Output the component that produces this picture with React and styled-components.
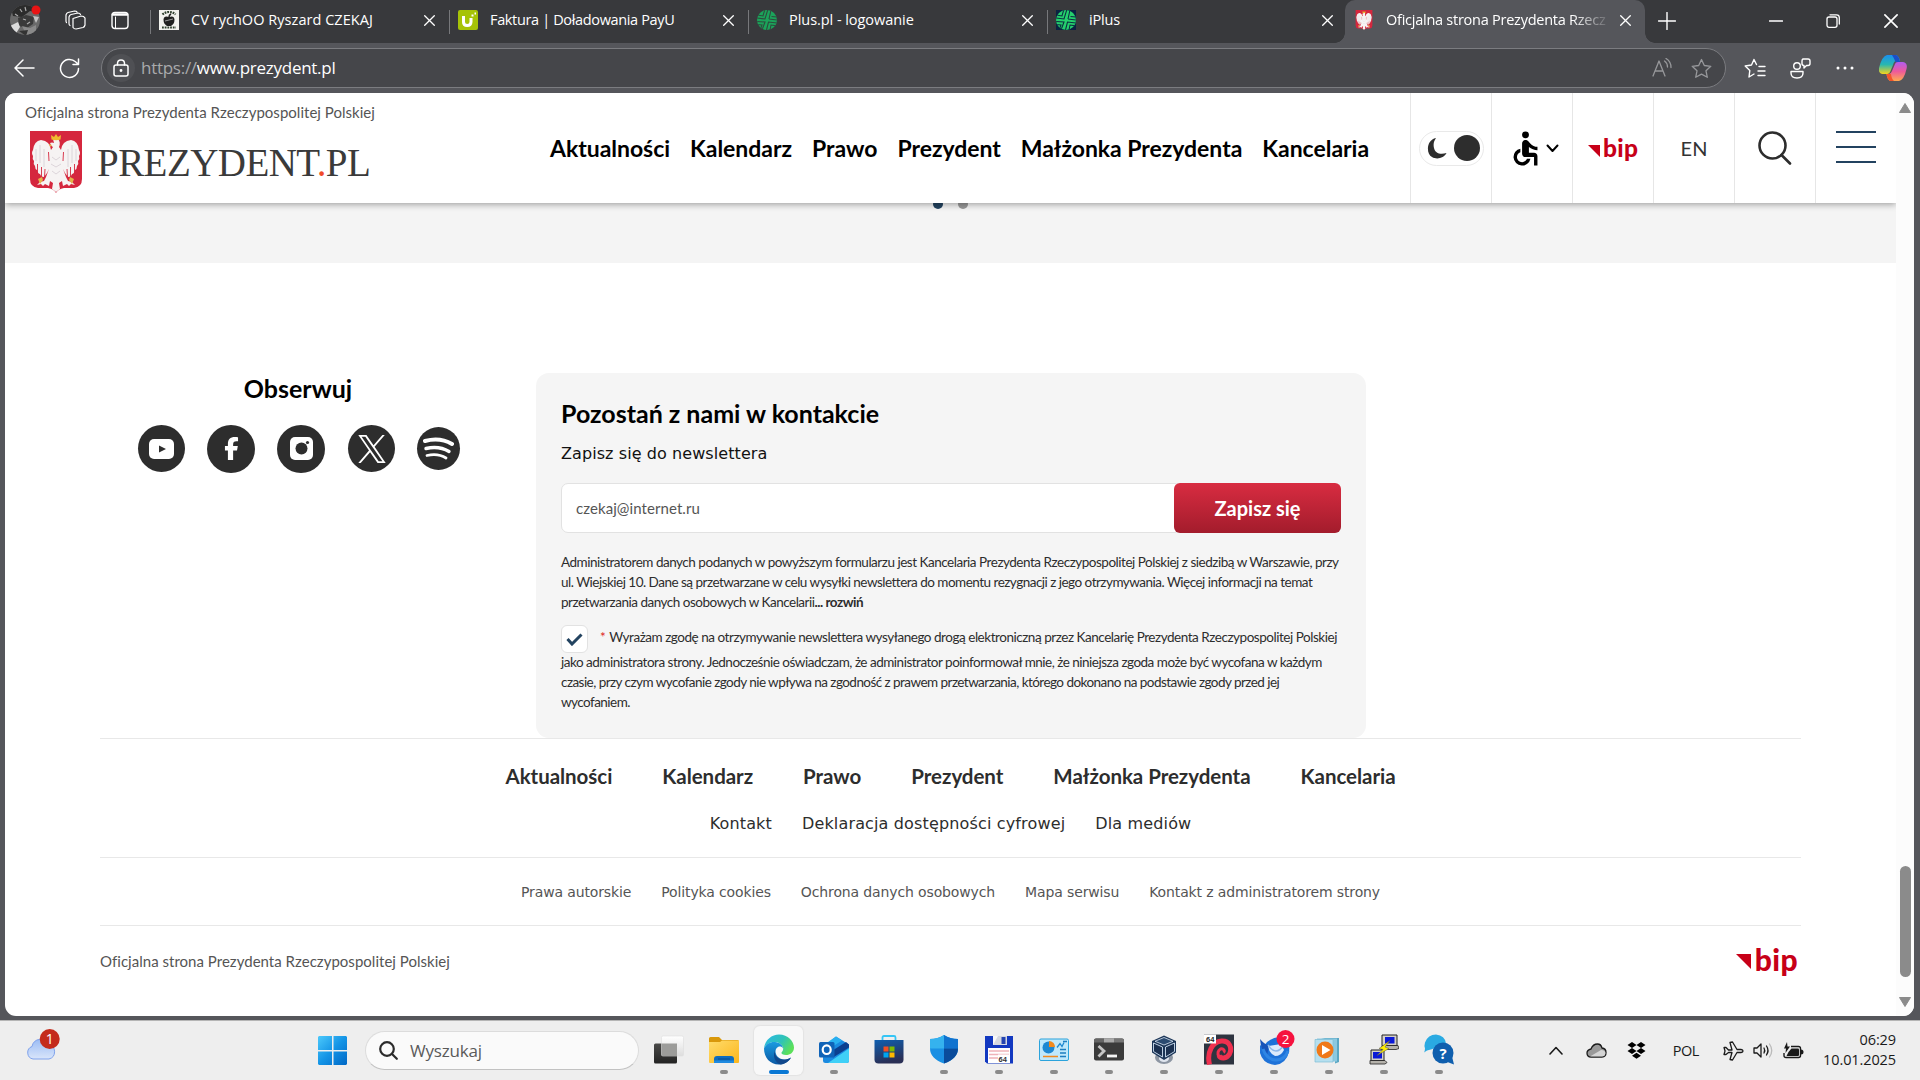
import React from "react";
import styled, { createGlobalStyle, css } from "styled-components";
import { MdAccessible } from "react-icons/md";
import { FaFacebookF } from "react-icons/fa6";

const UI = `"Open Sans", "Noto Sans", sans-serif`;
const LATO = `Lato, "Open Sans", sans-serif`;
const VERDANA = `"DejaVu Sans", sans-serif`;

const Global = createGlobalStyle`
  * { box-sizing: border-box; }
  body { margin: 0; background: #55565b; overflow: hidden; }
  svg { display: block; flex: none; }
  h1, h2, p { margin: 0; }
`;

const Screen = styled.div`
  width: 1920px;
  height: 1080px;
  display: flex;
  flex-direction: column;
  background: #55565b;
  font-family: ${UI};
`;

/* ---------- browser chrome ---------- */
const TabStrip = styled.div`
  height: 43px;
  flex: none;
  display: flex;
  background: #38393c;
  color: #fff;
`;
const StripTools = styled.div`
  width: 150px;
  display: flex;
  align-items: center;
  padding: 0 0 3px 10px;
`;
const Gap = styled.div`
  flex: none;
  width: ${(p) => p.$w}px;
`;
const Tab = styled.div`
  width: ${(p) => p.$w}px;
  flex: none;
  display: flex;
  align-items: center;
  padding: 0 ${(p) => p.$pr || 14}px 3px 9px;
  background: linear-gradient(#77787b, #77787b) 0 10px / 1px 24px no-repeat;
  ${(p) =>
    p.$active &&
    css`
      position: relative;
      padding: 0 14px 3px 10px;
      background: #55565b;
      border-radius: 10px 10px 0 0;
      &::before,
      &::after {
        content: "";
        position: absolute;
        bottom: 0;
        width: 10px;
        height: 10px;
      }
      &::before {
        left: -10px;
        background: radial-gradient(circle at 0 0, #38393c 9.5px, #55565b 10px);
      }
      &::after {
        right: -10px;
        background: radial-gradient(circle at 100% 0, #38393c 9.5px, #55565b 10px);
      }
    `}
`;
const TabTitle = styled.span`
  flex: 1;
  margin: 0 8px 0 ${(p) => p.$ml || 12}px;
  white-space: nowrap;
  font-size: 14.5px;
  line-height: 24px;
  letter-spacing: ${(p) => p.$ls}px;
  ${(p) =>
    p.$fade &&
    css`
      -webkit-mask-image: linear-gradient(90deg, #000 82%, transparent 100%);
      mask-image: linear-gradient(90deg, #000 82%, transparent 100%);
    `}
`;
const WindowButtons = styled.div`
  flex: 1;
  display: flex;
  align-items: center;
  padding: 0 22px 1px 13px;
`;
const Toolbar = styled.div`
  height: 50px;
  flex: none;
  display: flex;
  align-items: center;
  padding: 0 12px 0 14px;
  color: #fff;
`;
const AddressBar = styled.div`
  width: 1625px;
  height: 40px;
  display: flex;
  align-items: center;
  padding: 0 13px 0 5px;
  border: 1px solid #7b7c80;
  border-radius: 20px;
  background: #45464a;
`;
const LockBadge = styled.div`
  width: 28px;
  height: 28px;
  display: grid;
  place-items: center;
  border-radius: 50%;
  background: #4f5054;
`;
const Url = styled.div`
  flex: 1;
  margin: 0 0 1px 6px;
  font-size: 17px;
  letter-spacing: -0.27px;
  color: #a9aaac;
  b {
    font-weight: 400;
    color: #fff;
  }
`;

/* ---------- page viewport ---------- */
const Viewport = styled.div`
  height: 923px;
  margin: 0 6px 0 5px;
  flex: none;
  display: flex;
  overflow: hidden;
  background: #fff;
  border-radius: 11px;
`;
const Page = styled.div`
  width: 1891px;
  flex: none;
  overflow: hidden;
`;
const Scroll = styled.div`
  width: 18px;
  display: flex;
  flex-direction: column;
  align-items: center;
  padding: 10px 0 8px;
  background: #fcfcfc;
`;
const Thumb = styled.div`
  width: 11px;
  height: 111px;
  margin: 753px 0 20px;
  border-radius: 6px;
  background: #8b8b8b;
`;
const Header = styled.header`
  height: 110px;
  display: flex;
  position: relative;
  background: #fff;
  box-shadow: 0 1px 7px rgba(0, 0, 0, 0.4);
`;
const Brand = styled.div`
  width: 545px;
  padding: 9px 0 0 20px;
`;
const Official = styled.div`
  font: 400 15px/20px ${LATO};
  letter-spacing: 0.025px;
  color: #555;
  white-space: nowrap;
`;
const Logo = styled.div`
  display: flex;
  margin: 9px 0 0 5px;
`;
const LogoText = styled.div`
  margin: 10px 0 0 15px;
  font: 400 39px/44px "Liberation Serif", serif;
  letter-spacing: -0.55px;
  color: #3a3a3a;
  b {
    font-weight: 400;
    color: #f04a2a;
  }
`;
const Nav = styled.nav`
  flex: 1;
  display: flex;
  gap: 20px;
  padding-top: 41px;
  font: 700 23px/28px ${LATO};
  letter-spacing: -0.03px;
  color: #000;
  white-space: nowrap;
`;
const Cell = styled.div`
  width: 81px;
  flex: none;
  display: flex;
  align-items: center;
  justify-content: center;
  border-left: 1px solid #e6e6e6;
  font: 400 20px/24px ${LATO};
  color: #333;
`;
const Toggle = styled.div`
  width: 65px;
  height: 35px;
  display: flex;
  align-items: center;
  justify-content: space-between;
  padding: 0 3px 0 7px;
  border: 1px solid #e9e9e9;
  border-radius: 18px;
`;
const ToggleDot = styled.div`
  width: 26px;
  height: 26px;
  border-radius: 50%;
  background: #2d2d2d;
`;
const Burger = styled.div`
  width: 40px;
  height: 32px;
  margin-bottom: 2px;
  border: solid #234360;
  border-width: 2px 0;
  background: linear-gradient(#234360, #234360) 0 13px / 100% 2px no-repeat;
`;
const Bip = styled.div`
  display: flex;
  align-items: flex-start;
  margin-top: ${(p) => p.$mt || 0}px;
  color: #c70018;
  font: 900 ${(p) => p.$s}px/1 "Lato", sans-serif;
  letter-spacing: 0.4px;
  svg {
    margin: ${(p) => p.$s * 0.34}px ${(p) => p.$s * 0.13}px 0 0;
  }
`;
const Band = styled.div`
  height: 60px;
  display: flex;
  justify-content: center;
  gap: 15px;
  background: #f4f4f4;
`;
const Dot = styled.i`
  width: 10px;
  height: 10px;
  margin-top: -4px;
  border-radius: 50%;
  background: ${(p) => p.$c};
`;
const Columns = styled.section`
  display: flex;
  align-items: flex-start;
  padding: 110px 0 0 133px;
`;
const Social = styled.div`
  width: 398px;
  flex: none;
`;
const SocialTitle = styled.h2`
  width: 320px;
  text-align: center;
  font: 700 25px/30px ${LATO};
  color: #000;
`;
const SocialRow = styled.div`
  display: flex;
  align-items: center;
  height: 48px;
  margin-top: 21.5px;
`;
const Circle = styled.div`
  width: ${(p) => p.$d}px;
  height: ${(p) => p.$d}px;
  margin-right: ${(p) => p.$mr}px;
  display: grid;
  place-items: center;
  border-radius: 50%;
  background: #2d2d2d;
  color: #fff;
`;
const Card = styled.div`
  width: 830px;
  height: 365px;
  padding: 25px;
  border-radius: 13px;
  background: #f5f5f5;
`;
const CardTitle = styled.h2`
  font: 700 25px/30px ${LATO};
  color: #000;
`;
const CardSub = styled.p`
  margin-top: 15px;
  font: 400 16px/22px ${VERDANA};
  letter-spacing: 0.08px;
  color: #111;
`;
const Form = styled.div`
  display: flex;
  height: 50px;
  margin-top: 18px;
`;
const Field = styled.div`
  flex: 1;
  margin-right: -8px;
  padding: 0 14px;
  border: 1px solid #e2e2e2;
  border-radius: 7px;
  background: #fff;
  font: 400 15px/48px ${LATO};
  letter-spacing: 0.08px;
  color: #555;
`;
const Submit = styled.button`
  width: 167px;
  position: relative;
  border: 0;
  padding: 0;
  border-radius: 6px;
  background: linear-gradient(#d82c41, #a31c2c);
  font: 700 20px/50px ${LATO};
  color: #fff;
`;
const Legal = styled.p`
  margin-top: ${(p) => p.$mt}px;
  font: 400 13.5px/20px ${LATO};
  color: #2d2d2d;
  white-space: nowrap;
`;
const Line = styled.span`
  display: block;
  letter-spacing: ${(p) => p.$ls}px;
`;
const Check = styled.span`
  display: inline-grid;
  place-items: center;
  width: 27px;
  height: 28px;
  margin: 0 12px -1px 0;
  vertical-align: -3.5px;
  border: 1px solid #e2e2e2;
  border-radius: 6px;
  background: #fff;
`;
const Star = styled.span`
  margin-right: 4px;
  color: #d22;
`;
const Footer = styled.footer`
  width: 1701px;
  margin-left: 95px;
`;
const FootBlock = styled.div`
  height: ${(p) => p.$h}px;
  border-top: 1px solid #e8e8e8;
`;
const FootNav = styled.div`
  display: flex;
  justify-content: center;
  gap: 50px;
  padding-top: 24px;
  font: 700 20.5px/26px ${LATO};
  letter-spacing: -0.04px;
  color: #2d2d2d;
`;
const FootLinks = styled.div`
  display: flex;
  justify-content: center;
  gap: 30px;
  padding-top: ${(p) => p.$pt}px;
  font: 400 ${(p) => p.$s}px/22px ${VERDANA};
  letter-spacing: ${(p) => p.$ls}px;
  color: ${(p) => p.$c};
`;
const FootBottom = styled.div`
  display: flex;
  justify-content: space-between;
  align-items: flex-start;
  padding: 25px 3px 0 0;
  border-top: 1px solid #e8e8e8;
`;

/* ---------- taskbar ---------- */
const Taskbar = styled.div`
  height: 60px;
  margin-top: 4px;
  flex: none;
  display: flex;
  align-items: center;
  background: #eee;
  border-top: 1px solid #b5b5b5;
`;
const Weather = styled.div`
  width: 318px;
  padding: 0 0 5px 24px;
`;
const SearchPill = styled.div`
  width: 274px;
  height: 39px;
  margin: 0 5px 0 17px;
  display: flex;
  align-items: center;
  gap: 12px;
  padding-left: 13px;
  border: 1px solid #dcdcdc;
  border-bottom-color: #c2c2c2;
  border-radius: 20px;
  background: #fafafa;
  font-size: 17px;
  letter-spacing: -0.2px;
  color: #5a5a5a;
`;
const TaskButton = styled.div`
  width: 49px;
  height: 49px;
  margin-right: 6px;
  flex: none;
  display: flex;
  flex-direction: column;
  align-items: center;
  padding-top: 8px;
  border-radius: 6px;
  background: ${(p) => (p.$on ? "#f8f8f8" : "transparent")};
  box-shadow: ${(p) => (p.$on ? "0 0 1px 1px #e3e3e3" : "none")};
`;
const Mark = styled.i`
  width: ${(p) => (p.$on ? 20 : 8)}px;
  height: 4px;
  margin-top: 4.5px;
  border-radius: 2px;
  background: ${(p) => (p.$on ? "#0a78d4" : "#8a8a8a")};
`;
const BirdIcon = styled.svg`
  margin: -5px 0 -1px 6px;
`;
const Tray = styled.div`
  margin-left: auto;
  display: flex;
  align-items: center;
  padding-right: 24px;
  color: #1a1a1a;
  font-size: 14.5px;
  letter-spacing: -0.4px;
`;
const Clock = styled.div`
  width: 92px;
  padding-bottom: 2px;
  text-align: right;
  font-size: 14.5px;
  line-height: 20px;
  letter-spacing: -0.1px;
`;

/* ---------- drawings ---------- */
const Stroke = ({ w, h, vb, sw = 1.5, c = "currentColor", children }) => (
  <svg width={w} height={h} viewBox={vb || `0 0 ${w} ${h}`} fill="none" stroke={c} strokeWidth={sw} strokeLinecap="round" strokeLinejoin="round">
    {children}
  </svg>
);
const Cross = ({ s = 11 }) => (
  <Stroke w={s} h={s} vb="0 0 11 11" sw={1.3}>
    <path d="M.7.7l9.6 9.6M10.3.7L.7 10.3" />
  </Stroke>
);
const Crest = ({ w, h }) => (
  <svg width={w} height={h} viewBox="0 0 52 62">
    <path d="M0 0h52v48q0 8-8 9H34q-6 1-8 5-2-4-8-5H8q-8-1-8-9z" fill="#d5273e" />
    <path
      d="M24 12q-2-1-4 0 1 3 3 4l-2 3q-1-9-10-10-7 1-8 10-2 3 0 6-1 3 1 5-1 3 1 5 0 3 2 4 1 4 3 4 1 3 4 3l3-4 2-4-3 8-2 4-4 1-3 3 4-1 2 2 2-2 4 2 1-5 3 2-1 6 4 3 4-3-1-6 3-2 1 5 4-2 2 2 2-2 4 1-3-3-4-1-2-4-3-8 2 4 3 4q3 0 4-3 2 0 3-4 2-1 2-4 2-2 1-5 2-2 1-5 2-3 0-6-1-9-8-10-9 1-10 10l-2-3q2-5-1-8-3-2-5 0z"
      fill="#f6f3f3"
    />
    <path d="M10 14v18M6 18v12M14 18v18M42 14v18M46 18v12M38 18v18M22 26l4 3 4-3M21 33l5 3 5-3M22 40l4 3 4-3" stroke="#d6cdd3" strokeWidth=".8" fill="none" />
    <path d="M7.500 33v9M11.500 36v11M15 38l-.5 8M44.500 33v9M40.500 36v11M37 38l.5 8M18.500 21l.5 9M33.500 21l-.5 9" stroke="#d5273e" strokeWidth=".9" fill="none" />
    <path d="M21.500 8.500L21 4l3 2 2-3 2 3 3-2-.5 4.500q-4.500 1.500-9 0z" fill="#efb92f" />
    <path d="M19 13l3 1-2 2zM8 48l4-2 1 3-3 4zM44 48l-4-2-1 3 3 4zM15 52l3 2M37 52l-3 2" fill="#e4b44a" />
  </svg>
);
const PlusBall = ({ dark }) => (
  <svg width="20" height="20" viewBox="0 0 20 20">
    {dark && <rect width="20" height="20" fill="#0b2341" />}
    <clipPath id={dark ? "pb1" : "pb2"}>
      <circle cx="10" cy="10" r="10" />
    </clipPath>
    <g clipPath={`url(#${dark ? "pb1" : "pb2"})`}>
      <rect width="20" height="20" fill={dark ? "#24d06c" : "#1ba35a"} />
      <path d="M0 8l8 1 3-10M0 5l6 1 2-7M0 11.500l8 .5-3 8M9.500 20l2-8 9 1M13 20l1-5 7 1M12 9l2-9M12 9l8 1M14.500 6.500l6 .5M3 20l2-5-5-.5" stroke={dark ? "#0b2f41" : "#2e4a3d"} strokeWidth="1.100" fill="none" />
    </g>
  </svg>
);
const BipLogo = ({ s, mt }) => (
  <Bip $s={s} $mt={mt}>
    <svg width={s * 0.5} height={s * 0.5} viewBox="0 0 12 12">
      <path d="M0 0h12v12z" fill="#c70018" />
    </svg>
    bip
  </Bip>
);

const Cloud = () => (
  <svg width="36" height="38" viewBox="0 0 36 38">
    <defs>
      <linearGradient id="cl" x2="0" y2="1">
        <stop stopColor="#9bbcf4" />
        <stop offset="1" stopColor="#d9e5fa" />
      </linearGradient>
    </defs>
    <path d="M9 30a6.500 6.500 0 0 1-1-12.500 9 9 0 0 1 17-2 7.500 7.500 0 0 1 0 14.500z" fill="url(#cl)" stroke="#7fa2ec" strokeWidth="1" />
    <circle cx="25.700" cy="10" r="10" fill="#c42b1c" />
    <text x="25.700" y="15" fontSize="14" fill="#fff" textAnchor="middle" fontFamily="Open Sans">1</text>
  </svg>
);

const I = ({ children }) => (
  <svg width="30" height="31" viewBox="0 0 30 30">
    {children}
  </svg>
);
const Icons = {
  task: (
    <I>
      <defs>
        <linearGradient id="tv" x2="0" y2="1"><stop stopColor="#4a4a48" /><stop offset="1" stopColor="#222" /></linearGradient>
        <linearGradient id="tw" x2="0" y2="1"><stop stopColor="#fff" /><stop offset="1" stopColor="#ddd" /></linearGradient>
      </defs>
      <rect x="0" y="9" width="23" height="20" rx="1.500" fill="url(#tv)" />
      <rect x="7.500" y="1.500" width="22" height="20" rx="1.500" fill="url(#tw)" stroke="#ddd" strokeWidth=".6" />
      <path d="M7.500 9H23v12.500H9q-1.500 0-1.500-1.500z" fill="#9c9c9a" />
    </I>
  ),
  folder: (
    <I>
      <defs><linearGradient id="fo" x2="1" y2="1"><stop stopColor="#ffdc6b" /><stop offset="1" stopColor="#fbb61c" /></linearGradient></defs>
      <path d="M0 4q0-1.500 1.500-1.500H10l3 3h15.500Q30 5.500 30 7v4H0z" fill="#d9980a" />
      <path d="M0 7.500h11l2-1.500h17v21.500q0 1-1 1H1q-1 0-1-1z" fill="url(#fo)" />
      <path d="M5 28.500v-4q0-3 3-3h14q3 0 3 3v4z" fill="#0f6cbd" />
      <path d="M5 26h20v2.500H5z" fill="#1f8ae0" />
      <path d="M9 24.500h12" stroke="#0a4a8c" />
    </I>
  ),
  edge: (
    <I>
      <defs>
        <linearGradient id="e1" x2="1" y2=".5"><stop stopColor="#2bb8e8" /><stop offset=".6" stopColor="#2fc3b8" /><stop offset="1" stopColor="#5be05a" /></linearGradient>
        <linearGradient id="e2" x2="0" y2="1"><stop stopColor="#1a9be0" /><stop offset="1" stopColor="#0c59a4" /></linearGradient>
      </defs>
      <path d="M0 14C1 5 8 0 15 0c9 0 15 7 15 13 0 5-4 7.500-8 7.500-3 0-5-1-4.500-2.500C19 16 19.500 15 19 13c-1-4-6-6-10-5.500C5 8 2 10 0 14z" fill="url(#e1)" />
      <path d="M0 14c2-5 7-7 11-6.500 4.500.5 8 3 8 6.500-1-2-3-2.500-5-1.500-4 2-3 9 2 11.500 4 2 8 1 11-1-3 5-8 7-12 7C6 30 0 23 0 14z" fill="url(#e2)" />
      <path d="M12 14c-3 4 0 9 4 10.500 4 1.500 8 .5 11-1.500-2 4-6 6.500-10 7-6-1-9.500-10-5-16z" fill="#11488c" />
    </I>
  ),
  outlook: (
    <I>
      <path d="M4 12L17 2l13 8v16q0 2.500-2.500 2.500h-21Q4 28.500 4 26z" fill="#1a8ae0" />
      <path d="M4 11L17 2l6 4-14 9z" fill="#28b0f0" />
      <path d="M12 17l15-9.500 3 2.500v3L14 23z" fill="#0b3f8f" />
      <path d="M9 28.500L30 14v12q0 2.500-2.500 2.500z" fill="#3fd0f7" />
      <rect x="0" y="7.500" width="15.500" height="15.500" rx="1.500" fill="#0f63b8" />
      <ellipse cx="7.700" cy="15.200" rx="4" ry="4.300" fill="none" stroke="#fff" strokeWidth="2.200" />
    </I>
  ),
  store: (
    <I>
      <defs><linearGradient id="st" x2=".3" y2="1"><stop stopColor="#0f5fb0" /><stop offset="1" stopColor="#2a2f55" /></linearGradient></defs>
      <path d="M8.500 6V3q0-1.500 1.500-1.500h10q1.500 0 1.500 1.500v3" fill="none" stroke="#35c5f5" strokeWidth="1.800" />
      <path d="M.5 5.500h29V25q0 4-4 4h-21q-4 0-4-4z" fill="url(#st)" />
      <path d="M9.500 12h5v5h-5z" fill="#f25022" /><path d="M15.500 12h5v5h-5z" fill="#7fba00" />
      <path d="M9.500 18h5v5h-5z" fill="#00a4ef" /><path d="M15.500 18h5v5h-5z" fill="#ffb900" />
    </I>
  ),
  shield: (
    <I>
      <path d="M15 .5q6 4 14 4V14q0 10-14 15Q1 24 1 14V4.500q8 0 14-4z" fill="#1a8fe3" />
      <path d="M15 .5q6 4 14 4V14H15z" fill="#1173cf" /><path d="M1 4.500q8 0 14-4V14H1z" fill="#35b2ee" />
      <path d="M15 14h14q0 10-14 15z" fill="#0a4b9b" />
    </I>
  ),
  floppy: (
    <I>
      <path d="M1 1.500h28v27.500H3l-2-2z" fill="#1238c0" />
      <path d="M9 1.500h14v9H9z" fill="#d5d8e0" /><path d="M17.500 2.500h4v7h-4z" fill="#2444b0" /><path d="M9 1.500h5l-5 9z" fill="#f8f8f8" />
      <path d="M4 13.500h22v15H4z" fill="#fff" />
      <path d="M5 16.500h20M5 20h20M5 23.500h20" stroke="#efb3b8" strokeWidth="1.500" />
      <rect x="14" y="20" width="11" height="7.500" fill="#fff" />
      <text x="14.500" y="27" fontSize="7.500" fontWeight="700" fontFamily="Liberation Sans" fill="#333">64</text>
    </I>
  ),
  panel: (
    <I>
      <rect x=".5" y="4.500" width="29" height="21.500" rx="1.500" fill="#bfe8fb" stroke="#2ba3dc" />
      <circle cx="9.500" cy="13" r="6" fill="#1e88d2" /><path d="M10 12.500V6.500a6 6 0 0 1 6 6z" fill="#f28a1e" />
      <path d="M18 13l3-4 2 3 2-4" stroke="#1e88d2" strokeWidth="1.300" fill="none" />
      <path d="M4 22h15" stroke="#f28a1e" strokeWidth="1.500" />
      <path d="M21 15h6M21 18.500h6M21 22h6M24 7h4" stroke="#1e7ec0" strokeWidth="1.600" />
    </I>
  ),
  term: (
    <I>
      <path d="M0 6q0-2 2-2h26q2 0 2 2v18q0 2-2 2H2q-2 0-2-2z" fill="#3b3b3b" />
      <path d="M0 8V6q0-2 2-2h8v4z" fill="#666" /><path d="M10 4h10v4H10z" fill="#aaa" /><path d="M20 4h8q2 0 2 2v2H20z" fill="#777" />
      <path d="M4.500 11.500l5.500 5-5.500 5.500" stroke="#c5c5c5" strokeWidth="2.800" fill="none" />
      <path d="M13 21.500h10" stroke="#f4f4f4" strokeWidth="2.800" />
    </I>
  ),
  vbox: (
    <I>
      <ellipse cx="15" cy="23" rx="9" ry="6.500" fill="#8c95a2" /><ellipse cx="15" cy="24" rx="5" ry="3.500" fill="#dfe5ee" />
      <path d="M3 6.500L15 1l12 5.500V18l-12 7.500L3 18z" fill="#1b3557" />
      <path d="M6 6.800L15 3l9 3.800-9 3.700z" fill="#2a4a70" stroke="#dbe6f2" strokeWidth=".8" />
      <path d="M4.500 8.500l9 4v10l-9-5.500zM25.500 8.500l-9 4v10l9-5.500z" fill="#1a3050" stroke="#cfe0f2" strokeWidth=".9" />
    </I>
  ),
  red: (
    <I>
      <rect width="30" height="30" fill="#2e3440" />
      <path d="M5.500 30C2.500 18 8.500 7 17.500 6.500c8-.5 11 7 8 13-3 5-9 5-10.500 1.500" fill="none" stroke="#f0304f" strokeWidth="5" />
      <path d="M15 22c-2-3-1-6 1.500-7.500 3-1 5 2 3 3.500" fill="none" stroke="#f0304f" strokeWidth="3" />
      <rect width="12" height="9" fill="#fff" />
      <text x="2" y="7.500" fontSize="7.500" fontWeight="700" fontFamily="Liberation Sans" fill="#222">64</text>
    </I>
  ),
  bird: (
    <BirdIcon width="36" height="37" viewBox="0 0 36 37">
      <path d="M1 16q2 2 4 1 5-8 15-9l9 3q2 6 1 12-3 12-14 13Q4 35 1 24z" fill="#1e72d8" />
      <path d="M1 10q5 6 9 6L8 27q-6-5-7-17z" fill="#1753b8" />
      <path d="M9 17l13-2 3 6q-3 6-9 6-6-3-7-10z" fill="#dcebfb" />
      <path d="M9 16q4 6 8 6t8-6" fill="none" stroke="#8db8ea" strokeWidth="1.500" />
      <path d="M4 20q4 11 13 11t12-9" fill="none" stroke="#2f86e4" strokeWidth="3" />
      <circle cx="26.500" cy="10" r="9" fill="#f6123f" />
      <text x="26.500" y="15" fontSize="13.500" textAnchor="middle" fill="#fff" fontFamily="Open Sans">2</text>
    </BirdIcon>
  ),
  media: (
    <I>
      <path d="M7 3.500h18v24l-4 1.500V7z" fill="#5aa7c4" /><path d="M3 4h20v23H3z" fill="#8cc9e0" /><path d="M1 5h18v22.500H1z" fill="#b5dfef" stroke="#7ebdd6" strokeWidth=".7" />
      <circle cx="11" cy="15.500" r="8.500" fill="#f07818" /><path d="M8 10.500l8.500 5-8.500 5z" fill="#fff" />
    </I>
  ),
  putty: (
    <I>
      <path d="M13 .5h15v10.500H13z" fill="#d4d0c8" stroke="#222" /><path d="M16 2.500h9.500v6.500H16z" fill="#0a18d8" />
      <path d="M13 11h16l1 3-3 1H12z" fill="#b5b2ab" stroke="#222" strokeWidth=".8" />
      <path d="M2 15.500h13V26H2z" fill="#d4d0c8" stroke="#222" /><path d="M4 17.500h9V24H4z" fill="#0a18d8" />
      <path d="M1 26h15l2 2-2 1.500H1z" fill="#b5b2ab" stroke="#222" strokeWidth=".8" />
      <path d="M21 6l-11 8 4 1-6 6 12-7-4-1.500z" fill="#ffee00" stroke="#555" strokeWidth=".5" />
    </I>
  ),
  help: (
    <I>
      <path d="M0 18q1-2 1-4-1-3 0-6Q4 0 12 0q9 1 10 9-6 0-10 4-4 2-9 3z" fill="#2aaae2" />
      <circle cx="19" cy="18.500" r="10.500" fill="#0f5fae" /><path d="M22 27l8 3-2-8z" fill="#0f5fae" />
      <text x="19" y="24" fontSize="15" fontWeight="700" textAnchor="middle" fill="#fff" fontFamily="Open Sans">?</text>
    </I>
  ),
};

const apps = [
  ["task", 0], ["folder", 1], ["edge", 2], ["outlook", 1], ["store", 0], ["shield", 1], ["floppy", 1],
  ["panel", 1], ["term", 1], ["vbox", 1], ["red", 1], ["bird", 1], ["media", 1], ["putty", 1], ["help", 1],
];
const sections = ["Aktualności", "Kalendarz", "Prawo", "Prezydent", "Małżonka Prezydenta", "Kancelaria"];
const official = "Oficjalna strona Prezydenta Rzeczypospolitej Polskiej";

const Chrome = () => (
  <>
    <TabStrip>
      <StripTools>
        <svg width="32" height="32" viewBox="0 0 32 32">
          <defs><clipPath id="av"><circle cx="15" cy="16" r="15" /></clipPath></defs>
          <g clipPath="url(#av)">
            <rect width="32" height="32" fill="#6a6a6a" />
            <path d="M0 0h32v9L20 7 12 13 3 12z" fill="#2b2b2b" />
            <path d="M8 14l8-3 8 2-1 7-6 4-8-2z" fill="#3a3a3a" /><path d="M0 22l8-4 2 5-5 8z" fill="#ddd" />
            <path d="M12 22l8 2 6-3v8l-9 3z" fill="#8a8a8a" /><path d="M23 12l6 1-3 6z" fill="#c4c4c4" /><path d="M9 27l9-1-2 6z" fill="#333" />
            <path d="M10 5l2 3M15 3l1 4M5 10l3 2M13 15l3 1M20 18l-3 2" stroke="#aaa" strokeWidth="1.200" />
          </g>
          <circle cx="26" cy="6" r="4.500" fill="#e81414" />
        </svg>
        <Gap $w={23} />
        <Stroke w={21} h={20} sw={1.2}>
          <path d="M8 8.500l8-2.500q3 0 4 2v7q-.5 2-2 2.500L11 19q-2 0-3-1.500z" />
          <path d="M5 15.500q-1-.5-1-2V7q.5-2 2-2.500L13 3q2 0 2.500 1.500M1.500 12.500Q1 12 1 11V5q.5-2 2-2.500L9.500 1q2 0 2.500 1" />
        </Stroke>
        <Gap $w={25} />
        <Stroke w={18} h={19} sw={1.4}>
          <rect x="1" y="1.500" width="16" height="16" rx="3" /><path d="M2 3.500h14" strokeWidth="2.600" /><path d="M4.500 6v11" strokeWidth="1" />
        </Stroke>
      </StripTools>
      <Tab $w={299}>
        <svg width="20" height="20" viewBox="0 0 20 20">
          <rect width="20" height="20" fill="#f2f2ee" />
          <path d="M3.500 4.500Q6 2 10 2t6.500 2.500M3 17.500h14" fill="none" stroke="#30402f" strokeWidth="2.200" strokeDasharray="1.800 .9" />
          <path d="M10 7q5-2 5.500 2.500 0 4.500-3.500 6.500H8q-3.500-2-3.500-6.500Q5 5 10 7z" fill="#1f1f1f" /><path d="M10 7q0-2 2-3" stroke="#222" strokeWidth="1.500" fill="none" /><path d="M6 11l8-2" stroke="#999" />
        </svg>
        <TabTitle $ls={0.04}>CV rychOO Ryszard CZEKAJ</TabTitle><Cross />
      </Tab>
      <Tab $w={299}>
        <svg width="20" height="20" viewBox="0 0 20 20">
          <rect width="20" height="20" rx="2" fill="#a6c307" />
          <path d="M5.500 6v6q0 3.500 3.700 3.500T13 12V8" fill="none" stroke="#fff" strokeWidth="3" /><path d="M13.500 5.500h2M16.500 3.500h1.500" stroke="#fff" strokeWidth="2" />
        </svg>
        <TabTitle $ls={-0.35}>Faktura | Doładowania PayU</TabTitle><Cross />
      </Tab>
      <Tab $w={299}><PlusBall /><TabTitle $ls={-0.05}>Plus.pl - logowanie</TabTitle><Cross /></Tab>
      <Tab $w={298} $pr={12}><PlusBall dark /><TabTitle $ls={-0.2} $ml={13}>iPlus</TabTitle><Cross /></Tab>
      <Tab $w={300} $active>
        <Crest w={18} h={20} />
        <Gap $w={1} />
        <TabTitle $ls={-0.25} $fade>Oficjalna strona Prezydenta Rzecz</TabTitle><Cross />
      </Tab>
      <WindowButtons>
        <Stroke w={18} h={18} sw={1.4}><path d="M9 .5v17M.5 9h17" /></Stroke>
        <Gap $w={93} />
        <Stroke w={14} h={14} sw={1.3}><path d="M.5 7h13" /></Stroke>
        <Gap $w={43} />
        <Stroke w={14} h={14} sw={1.3}><rect x="1" y="3" width="10" height="10.300" rx="2" /><path d="M4 .8h6.500q2.800 0 2.800 2.800V10" /></Stroke>
        <Gap $w={44} />
        <Cross s={14} />
      </WindowButtons>
    </TabStrip>
    <Toolbar>
      <Stroke w={21} h={18} sw={1.5}><path d="M20 9H1M9 1L1 9l8 8" /></Stroke>
      <Gap $w={24} />
      <Stroke w={21} h={21} sw={1.5}><path d="M19.500 10.500a9 9 0 1 1-3-6.800L19 6M19.500 1v5.500H14" /></Stroke>
      <Gap $w={21} />
      <AddressBar>
        <LockBadge>
          <Stroke w={16} h={18} sw={1.5}><rect x="1" y="6" width="14" height="11" rx="2" /><path d="M4.500 6V4.500q0-3.500 3.500-3.500t3.500 3.500V6" /><circle cx="8" cy="11.500" r=".7" fill="#fff" /></Stroke>
        </LockBadge>
        <Url>https://<b>www.prezydent.pl</b></Url>
        <Stroke w={20} h={20} sw={1.3} c="#97989b"><path d="M1 18L7 3l6 15M3 13h8M12.500 3q3 2 3 6M14 .5q5 3 5 9" /></Stroke>
        <Gap $w={19} />
        <Stroke w={21} h={21} sw={1.3} c="#97989b"><path d="M10.500 1.500l2.800 6 6.500.8-4.800 4.500 1.300 6.500-5.800-3.200-5.800 3.200L6 12.800 1.200 8.300l6.500-.8z" /></Stroke>
      </AddressBar>
      <Gap $w={18} />
      <Stroke w={22} h={21} sw={1.4}><path d="M12.500 6.500L10 1.500 7.500 7 1.200 8l4.600 4.600L5 19l5-3M15 8.500h6M14 13h7M14 17.500h7" /></Stroke>
      <Gap $w={24} />
      <Stroke w={21} h={21} sw={1.4}><circle cx="7" cy="8" r="3.300" /><path d="M1 13.500h12v1.500q0 5-6 5t-6-5zM13 1h5q2 0 2 2v2.500q0 2-2 2h-1.500L14 10V7.500q-2 0-2-2V3q0-1.500 1-2z" /></Stroke>
      <Gap $w={25} />
      <svg width="18" height="4" viewBox="0 0 18 4" fill="#fff"><circle cx="2" cy="2" r="1.500" /><circle cx="9" cy="2" r="1.500" /><circle cx="16" cy="2" r="1.500" /></svg>
      <Gap $w={25} />
      <svg width="28" height="26" viewBox="0 0 28 26">
        <defs>
          <linearGradient id="c1" x2="0" y2="1"><stop stopColor="#1a8ff0" /><stop offset=".5" stopColor="#28b7b0" /><stop offset="1" stopColor="#f5d31c" /></linearGradient>
          <linearGradient id="c2" x2="0" y2="1"><stop stopColor="#b05cf0" /><stop offset=".5" stopColor="#ee5a9a" /><stop offset="1" stopColor="#ffab50" /></linearGradient>
        </defs>
        <path d="M8 0h9q3 1 4 6h-4q-2 0-3 4l-2.500 6q-1 3-3.500 3H3q-4-1-3-6Q3 1 8 0z" fill="url(#c1)" />
        <path d="M13 0h4q3 1 4 7h-4.500q-2-5-3.500-7z" fill="#1b4fc8" />
        <path d="M20 26h-9q-3-2-3.500-7H10q2 0 3-3l3-7q.5-2 3-2h5q5 1 3.500 7Q25 25 20 26z" fill="url(#c2)" />
        <path d="M7.500 19H12q.5 5 3 7h-4q-3-2-3.500-7z" fill="#f2552c" />
      </svg>
    </Toolbar>
  </>
);

export default function App() {
  return (
    <Screen>
      <Global />
      <Chrome />
      <Viewport>
        <Page>
          <Header>
            <Brand>
              <Official>{official}</Official>
              <Logo><Crest w={52} h={62} /><LogoText>PREZYDENT<b>.</b>PL</LogoText></Logo>
            </Brand>
            <Nav>{sections.map((s) => <span key={s}>{s}</span>)}</Nav>
            <Cell>
              <Toggle>
                <svg width="20" height="24" viewBox="0 0 20 24"><path d="M9 2C-1 4-1 18 5 21c5 3 12 1 14.500-4C13 19 8 17 7 12 6 8 7 5 9 2z" fill="#2d2d2d" /></svg>
                <ToggleDot />
              </Toggle>
            </Cell>
            <Cell>
              <MdAccessible size={41} color="#000" />
              <Stroke w={13} h={9} sw={2} c="#000"><path d="M1.500 1.500l5 5.500 5-5.500" /></Stroke>
            </Cell>
            <Cell><BipLogo s={24.5} mt={1} /></Cell>
            <Cell>EN</Cell>
            <Cell><Stroke w={34} h={34} sw={2.6} c="#2d2d2d"><circle cx="14.500" cy="14.500" r="13" /><path d="M23.500 24l8.500 8.500" /></Stroke></Cell>
            <Cell><Burger /></Cell>
          </Header>
          <Band><Dot $c="#234360" /><Dot $c="#999" /></Band>
          <Columns>
            <Social>
              <SocialTitle>Obserwuj</SocialTitle>
              <SocialRow>
                <Circle $d={47} $mr={22}><svg width="25" height="20" viewBox="0 0 25 20"><rect width="25" height="20" rx="5" fill="#fff" /><path d="M10 6.500l7 3.500-7 3.500z" fill="#2d2d2d" /></svg></Circle>
                <Circle $d={48} $mr={22}><FaFacebookF size={23} /></Circle>
                <Circle $d={48} $mr={23}><svg width="23" height="23" viewBox="0 0 23 23"><rect width="23" height="23" rx="5" fill="#fff" /><circle cx="11.500" cy="11.500" r="6" fill="#2d2d2d" /><circle cx="17.500" cy="5.500" r="1.600" fill="#2d2d2d" /></svg></Circle>
                <Circle $d={47} $mr={21.5}><svg width="28" height="28" viewBox="0 0 24 24"><path d="M14.234 10.162 22.977 0h-2.072l-7.591 8.824L7.251 0H.258l9.168 13.343L.258 24H2.33l8.016-9.318L16.749 24h6.993zm-2.837 3.299-.929-1.329L3.076 1.560h3.182l5.965 8.532.929 1.329 7.754 11.090h-3.182z" fill="#fff" /></svg></Circle>
                <Circle $d={43} $mr={0}><svg width="31" height="23" viewBox="0 0 31 23" fill="none" stroke="#fff" strokeLinecap="round"><path d="M2 4q15-4 27 3" strokeWidth="4" /><path d="M3 11.500q13-3 23 3" strokeWidth="3.400" /><path d="M4 18.500q11-2.500 19 2.500" strokeWidth="2.800" /></svg></Circle>
              </SocialRow>
            </Social>
            <Card>
              <CardTitle>Pozostań z nami w kontakcie</CardTitle>
              <CardSub>Zapisz się do newslettera</CardSub>
              <Form><Field>czekaj@internet.ru</Field><Submit>Zapisz się</Submit></Form>
              <Legal $mt={19}>
                <Line $ls={-0.48}>Administratorem danych podanych w powyższym formularzu jest Kancelaria Prezydenta Rzeczypospolitej Polskiej z siedzibą w Warszawie, przy</Line>
                <Line $ls={-0.51}>ul. Wiejskiej 10. Dane są przetwarzane w celu wysyłki newslettera do momentu rezygnacji z jego otrzymywania. Więcej informacji na temat</Line>
                <Line $ls={-0.49}>przetwarzania danych osobowych w Kancelarii<b>... rozwiń</b></Line>
              </Legal>
              <Legal $mt={13}>
                <Line $ls={-0.465}><Check><svg width="17" height="13" viewBox="0 0 17 13"><path d="M1.500 6l4.500 5L15.500 1.500" fill="none" stroke="#234360" strokeWidth="3" /></svg></Check><Star>*</Star>Wyrażam zgodę na otrzymywanie newslettera wysyłanego drogą elektroniczną przez Kancelarię Prezydenta Rzeczypospolitej Polskiej</Line>
                <Line $ls={-0.495}>jako administratora strony. Jednocześnie oświadczam, że administrator poinformował mnie, że niniejsza zgoda może być wycofana w każdym</Line>
                <Line $ls={-0.545}>czasie, przy czym wycofanie zgody nie wpływa na zgodność z prawem przetwarzania, którego dokonano na podstawie zgody przed jej</Line>
                <Line $ls={-0.54}>wycofaniem.</Line>
              </Legal>
            </Card>
          </Columns>
          <Footer>
            <FootBlock $h={119}>
              <FootNav>{sections.map((s) => <span key={s}>{s}</span>)}</FootNav>
              <FootLinks $pt={24} $s={16} $ls={0.15} $c="#2d2d2d"><span>Kontakt</span><span>Deklaracja dostępności cyfrowej</span><span>Dla mediów</span></FootLinks>
            </FootBlock>
            <FootBlock $h={68}>
              <FootLinks $pt={23} $s={14} $ls={-0.13} $c="#555"><span>Prawa autorskie</span><span>Polityka cookies</span><span>Ochrona danych osobowych</span><span>Mapa serwisu</span><span>Kontakt z administratorem strony</span></FootLinks>
            </FootBlock>
            <FootBottom><Official>{official}</Official><BipLogo s={30} mt={-7} /></FootBottom>
          </Footer>
        </Page>
        <Scroll>
          <svg width="12" height="10" viewBox="0 0 12 10"><path d="M6 .5L11.500 9.500H.5z" fill="#8b8b8b" stroke="#8b8b8b" strokeLinejoin="round" /></svg>
          <Thumb />
          <svg width="12" height="10" viewBox="0 0 12 10"><path d="M6 9.500L.5.5h11z" fill="#8b8b8b" stroke="#8b8b8b" strokeLinejoin="round" /></svg>
        </Scroll>
      </Viewport>
      <Taskbar>
        <Weather><Cloud /></Weather>
        <svg width="30" height="29" viewBox="0 0 30 29">
          <defs><linearGradient id="wn" x2="1" y2="1"><stop stopColor="#4cc9fb" /><stop offset=".5" stopColor="#1494e6" /><stop offset="1" stopColor="#0067c5" /></linearGradient></defs>
          <path d="M1 0h13v14H0V1zM15.500 0H28l1 1v13H15.500zM0 15.500h14V29H1l-1-1zM15.500 15.500H29V28l-1 1H15.500z" fill="url(#wn)" />
        </svg>
        <SearchPill><Stroke w={19} h={19} sw={2.2} c="#2b2b2b"><circle cx="8" cy="8" r="6.800" /><path d="M13 13l4.800 4.800" /></Stroke>Wyszukaj</SearchPill>
        {apps.map(([n, m]) => (
          <TaskButton key={n} $on={m === 2}>
            {Icons[n]}
            {m > 0 && <Mark $on={m === 2} />}
          </TaskButton>
        ))}
        <Tray>
          <Stroke w={14} h={9} sw={1.6}><path d="M1 8l6-6.500L13 8" /></Stroke>
          <Gap $w={23} />
          <svg width="21" height="15" viewBox="0 0 21 15"><path d="M5 14q-4 0-4-4 0-3 4-4 2-5 6.500-5Q15 1 16 5q4 .5 4 4.500 0 4.500-4 4.500z" fill="#999" stroke="#1a1a1a" strokeWidth="1.300" /><path d="M4 13.500L15 7q4 0 4.500 3-.5 3.500-3.500 3.500z" fill="#d5d5d5" /></svg>
          <Gap $w={20} />
          <svg width="19" height="17" viewBox="0 0 19 17"><path d="M5 0l4.500 3L5 6 .5 3zM14 0l4.500 3L14 6 9.500 3zM5 6l4.500 3L5 12 .5 9zM14 6l4.500 3-4.500 3-4.500-3zM9.500 10.800l4.500 3-4.500 3-4.500-3z" fill="#000" /></svg>
          <Gap $w={27} />
          POL
          <Gap $w={24} />
          <Stroke w={21} h={20} sw={1.3}><path d="M1 6.500h2L5.500 9H9L7 1.500 9.500 1 14 8.500h4q2 .3 2 1.500t-2 1.500h-4L9.500 19 7 18.500 9 11.500H5.500L3 13.500H1l1-3.500z" /></Stroke>
          <Gap $w={9} />
          <Stroke w={21} h={17} sw={1.3}><path d="M1 6h3l4-4v13l-4-4H1zM11 6q1.500 2.500 0 5M13.500 4q3 4.500 0 9" /><path d="M16.500 2q4.500 6.500 0 13" stroke="#bbb" /></Stroke>
          <Gap $w={9} />
          <svg width="21" height="17" viewBox="0 0 21 17"><path d="M8 4.500h7.500q2 0 2 2v7q0 2-2 2H3q-2 0-2-2V11" fill="none" stroke="#1a1a1a" strokeWidth="1.400" /><path d="M8.500 6.500H15q1 0 1 1v5.500q0 1-1 1H3.500l2-4z" fill="#1a1a1a" /><path d="M18 7.500q2.500 0 2.500 2.500T18 12.500z" fill="#1a1a1a" /><path d="M4 0L1 6.500h2L2.500 11 7 4.500H4.500z" fill="#1a1a1a" /></svg>
          <Clock>06:29<br />10.01.2025</Clock>
        </Tray>
      </Taskbar>
    </Screen>
  );
}
